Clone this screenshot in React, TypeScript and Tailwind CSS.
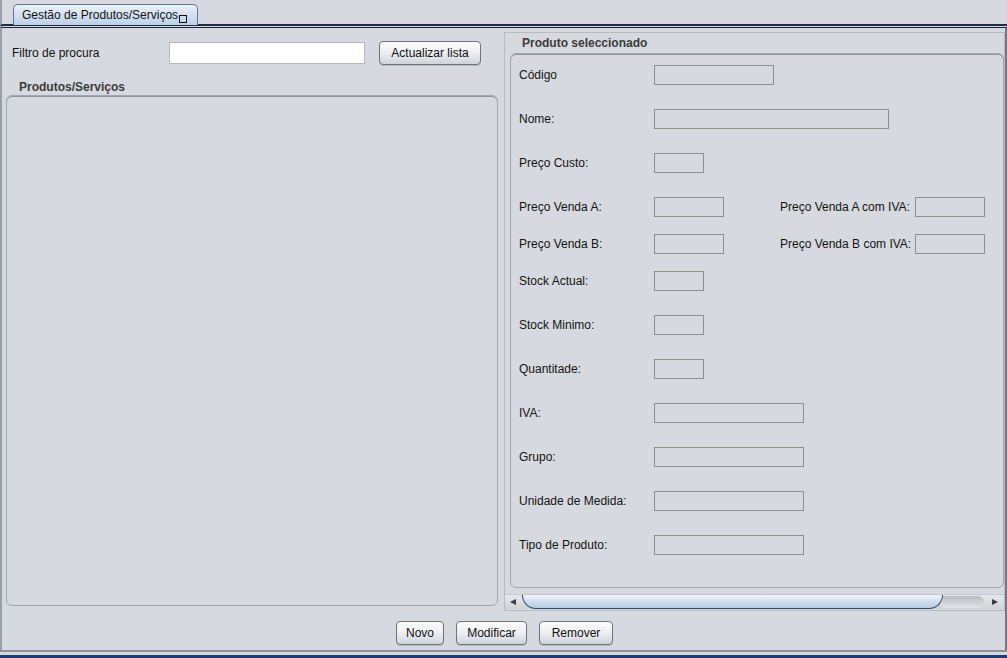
import React from "react";

const font = { fontFamily: '"Liberation Sans", Arial, sans-serif' };

function Field({ w }: { w: string }) {
  return <div className={`h-[20px] border border-[#8d8e90] bg-[#d6d9df] ${w}`} />;
}

function Btn({ label, w }: { label: string; w: string }) {
  return (
    <div
      className={`h-[24px] ${w} flex items-center justify-center rounded-[4px] border border-[#6f747c] bg-gradient-to-b from-[#fbfbfc] via-[#eceef1] to-[#cfd3d9] text-[12px] text-[#101010] shadow-[0_1px_0_#b8bcc3]`}
    >
      {label}
    </div>
  );
}

export default function App() {
  const rows: { label: string; mt: string; w: string; extra?: string }[] = [
    { label: "Código", mt: "mt-[11px]", w: "w-[120px]" },
    { label: "Nome:", mt: "mt-[24px]", w: "w-[235px]" },
    { label: "Preço Custo:", mt: "mt-[24px]", w: "w-[50px]" },
    { label: "Preço Venda A:", mt: "mt-[24px]", w: "w-[70px]", extra: "Preço Venda A com IVA:" },
    { label: "Preço Venda B:", mt: "mt-[17px]", w: "w-[70px]", extra: "Preço Venda B com IVA:" },
    { label: "Stock Actual:", mt: "mt-[17px]", w: "w-[50px]" },
    { label: "Stock Minimo:", mt: "mt-[24px]", w: "w-[50px]" },
    { label: "Quantitade:", mt: "mt-[24px]", w: "w-[50px]" },
    { label: "IVA:", mt: "mt-[24px]", w: "w-[150px]" },
    { label: "Grupo:", mt: "mt-[24px]", w: "w-[150px]" },
    { label: "Unidade de Medida:", mt: "mt-[24px]", w: "w-[150px]" },
    { label: "Tipo de Produto:", mt: "mt-[24px]", w: "w-[150px]" },
  ];

  return (
    <div
      className="w-[1007px] h-[658px] bg-[#d6d9df] overflow-hidden flex flex-col text-[12px] text-[#141414]"
      style={font}
    >
      {/* tab strip */}
      <div className="h-[26px] flex border-l-2 border-[#9aa0a8] border-b-2 border-b-[#1d2c4a] pl-[11px] pt-[4px]">
        <div className="h-[21px] w-[185px] rounded-t-[5px] border border-b-0 border-[#5f7694] bg-gradient-to-b from-[#eaf1f8] to-[#bcd1e7] flex items-end pl-[8px] pb-[3px]">
          <span className="leading-[14px]">Gestão de Produtos/Serviços</span>
          <span className="w-[8px] h-[8px] border border-[#111] mb-[-1px] ml-[1px]" />
        </div>
        <div className="flex-1" />
      </div>
      <div className="h-[2px] border-b border-[#202530] border-l-2 border-l-[#9aa0a8]" />

      {/* body */}
      <div className="flex-1 flex border-l-2 border-[#9aa0a8] border-r-2 border-r-[#6d7a8b]">
        <div className="flex-1 flex flex-col">
          <div className="flex">
            {/* left column */}
            <div className="w-[502px] pl-[4px] flex flex-col">
              <div className="flex items-center h-[25px] mt-[12px]">
                <span className="ml-[6px] w-[157px]">Filtro de procura</span>
                <div className="w-[196px] h-[22px] bg-white border border-[#b6b9be]" />
                <div className="ml-[14px]">
                  <Btn label="Actualizar lista" w="w-[102px]" />
                </div>
              </div>
              <div className="mt-[15px] ml-[13px] font-bold text-[#3c3c3c] leading-[14px]">
                Produtos/Serviços
              </div>
              <div className="mt-[1px] w-[492px] h-[511px] rounded-[6px] border border-[#a3a7ae] shadow-[inset_0_1px_0_#8f939a]" />
            </div>

            {/* right column */}
            <div className="w-[501px] mt-[4px] h-[579px] border border-[#b8bcc2] flex flex-col">
              <div className="ml-[17px] mt-[3px] font-bold text-[#3c3c3c] leading-[14px]">
                Produto seleccionado
              </div>
              <div className="ml-[5px] mt-[3px] w-[494px] h-[535px] shrink-0 rounded-[6px] border border-[#a3a7ae] shadow-[inset_0_1px_0_#8f939a] flex flex-col">
                {rows.map((r) => (
                  <div key={r.label} className={`flex items-center h-[20px] ${r.mt}`}>
                    <span className="ml-[8px] w-[135px]">{r.label}</span>
                    <Field w={r.w} />
                    {r.extra && (
                      <>
                        <span className="ml-[56px] w-[135px]">{r.extra}</span>
                        <Field w="w-[70px]" />
                      </>
                    )}
                  </div>
                ))}
              </div>
              {/* horizontal scrollbar */}
              <div className="mt-[6px] h-[15px] shrink-0 flex items-center border-t border-[#c4c8ce] bg-gradient-to-b from-[#e6e8eb] to-[#d0d3d8]">
                <svg width="10" height="10" viewBox="0 0 10 10" className="ml-[3px]">
                  <path d="M2 5 L8 2 L8 8 Z" fill="#3a3d42" />
                </svg>
                <div className="ml-[4px] w-[421px] h-[14px] rounded-b-full rounded-t-[2px] border border-[#34465f] border-t-0 bg-gradient-to-b from-[#f2f6fa] via-[#cfdeee] to-[#b6cce3]" />
                <div className="flex-1 h-[12px] bg-gradient-to-b from-[#b9bdc3] to-[#e0e3e7] rounded-r-[8px]" />
                <svg width="10" height="10" viewBox="0 0 10 10" className="ml-[6px] mr-[4px]">
                  <path d="M8 5 L2 2 L2 8 Z" fill="#3a3d42" />
                </svg>
              </div>
            </div>
          </div>

          {/* bottom buttons */}
          <div className="flex-1 flex items-start justify-center gap-[12px] pt-[10px] pl-[2px]">
            <Btn label="Novo" w="w-[48px]" />
            <Btn label="Modificar" w="w-[71px]" />
            <Btn label="Remover" w="w-[74px]" />
          </div>
        </div>
      </div>
      <div className="h-[2px] bg-[#8e939b]" />
      <div className="h-[3px] bg-[#d6d9df]" />
      <div className="h-[3px] bg-[#1b3c78]" />
    </div>
  );
}
